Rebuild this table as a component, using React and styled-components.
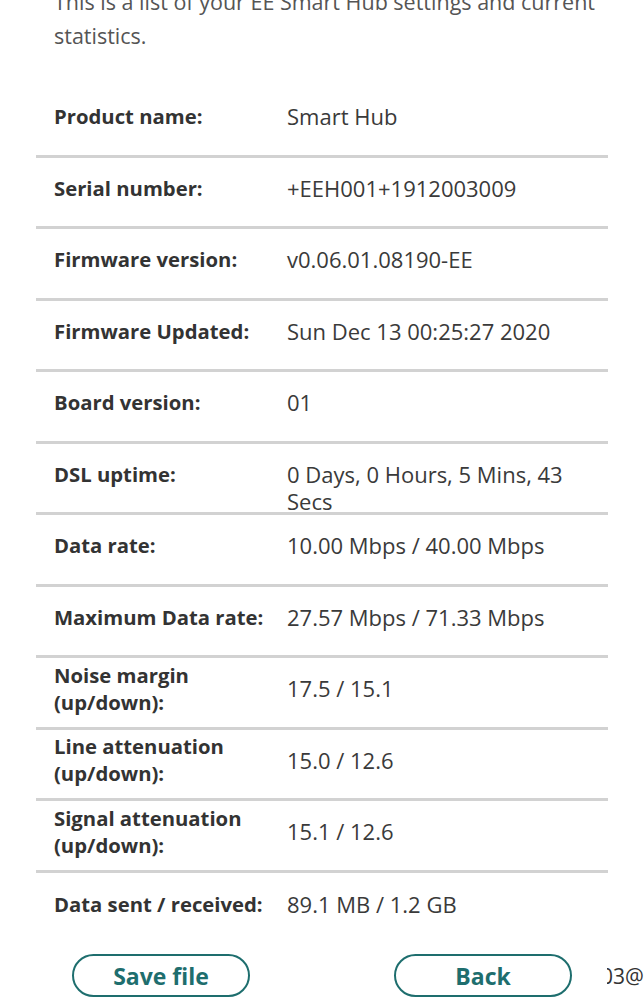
import React from 'react';
import styled, { createGlobalStyle } from 'styled-components';

const rows = [
    { label: 'Product name:', value: 'Smart Hub' },
    { label: 'Serial number:', value: '+EEH001+1912003009' },
    { label: 'Firmware version:', value: 'v0.06.01.08190-EE' },
    { label: 'Firmware Updated:', value: 'Sun Dec 13 00:25:27 2020' },
    { label: 'Board version:', value: '01' },
    { label: 'DSL uptime:', value: '0 Days, 0 Hours, 5 Mins, 43 Secs' },
    { label: 'Data rate:', value: '10.00 Mbps / 40.00 Mbps' },
    { label: 'Maximum Data rate:', value: '27.57 Mbps / 71.33 Mbps' },
    { label: 'Noise margin (up/down):', value: '17.5 / 15.1' },
    { label: 'Line attenuation (up/down):', value: '15.0 / 12.6' },
    { label: 'Signal attenuation (up/down):', value: '15.1 / 12.6' },
    { label: 'Data sent / received:', value: '89.1 MB / 1.2 GB', last: true },
];

function App() {
    return (
        <>
            <GlobalStyle />
            <Page>
                <Intro>
                    This is a list of your EE Smart Hub settings and current statistics.
                </Intro>
                <Table>
                    {rows.map((r) => (
                        <Row key={r.label} $last={r.last}>
                            <Label>{r.label}</Label>
                            <Value>{r.value}</Value>
                        </Row>
                    ))}
                </Table>
                <Buttons>
                    <PillButton>Save file</PillButton>
                    <PillButton>Back</PillButton>
                    <Clipped>
                        <span>03@</span>
                    </Clipped>
                </Buttons>
            </Page>
        </>
    );
}

export default App;

const GlobalStyle = createGlobalStyle`
    html, body {
        margin: 0;
        padding: 0;
        background: #ffffff;
        overflow: hidden;
    }
    body {
        font-family: "Open Sans", "Noto Sans", sans-serif;
        color: #333;
    }
`;

const Page = styled.div`
    width: 644px;
    height: 999px;
    overflow: hidden;
    display: flex;
    flex-direction: column;
`;

// scrolled page: first line of the paragraph is cut off at the top
const Intro = styled.p`
    margin: -15px 0 0 0;
    padding: 0 20px 0 54px;
    font-size: 21.5px;
    line-height: 34px;
    color: #555;
    height: 101px;
    flex-shrink: 0;
    box-sizing: border-box;
`;

const Table = styled.div`
    display: flex;
    flex-direction: column;
    flex-shrink: 0;
    margin: 0 36px;
    width: 572px;
`;

const Row = styled.div`
    display: flex;
    align-items: center;
    box-sizing: border-box;
    height: 71.5px;
    padding: 0 0 7px 18px;
    border-bottom: ${(p) => (p.$last ? 'none' : '3.5px solid #d2d2d2')};
`;

const Label = styled.div`
    width: 233px;
    flex-shrink: 0;
    font-size: 20.3px;
    line-height: 27px;
    font-weight: 700;
    color: #333;
`;

const Value = styled.div`
    flex: 1;
    height: 27px;
    font-size: 22px;
    line-height: 27px;
    color: #3a3a3a;
    padding-right: 10px;
`;

const Buttons = styled.div`
    display: flex;
    align-items: center;
    flex-shrink: 0;
    margin-top: 10px;
    padding-left: 72px;
    gap: 144px;
`;

const PillButton = styled.button`
    width: 178px;
    height: 43px;
    border: 2px solid #1e6e6e;
    border-radius: 22px;
    background: #fff;
    color: #1e6e6e;
    font-family: "Open Sans", "Noto Sans", sans-serif;
    font-size: 23px;
    font-weight: 700;
    padding: 0;
    flex-shrink: 0;
`;

const Clipped = styled.div`
    margin-left: -109px;
    width: 60px;
    overflow: hidden;
    font-size: 21px;
    color: #333;

    & > span {
        display: block;
        margin-left: -6px;
    }
`;
